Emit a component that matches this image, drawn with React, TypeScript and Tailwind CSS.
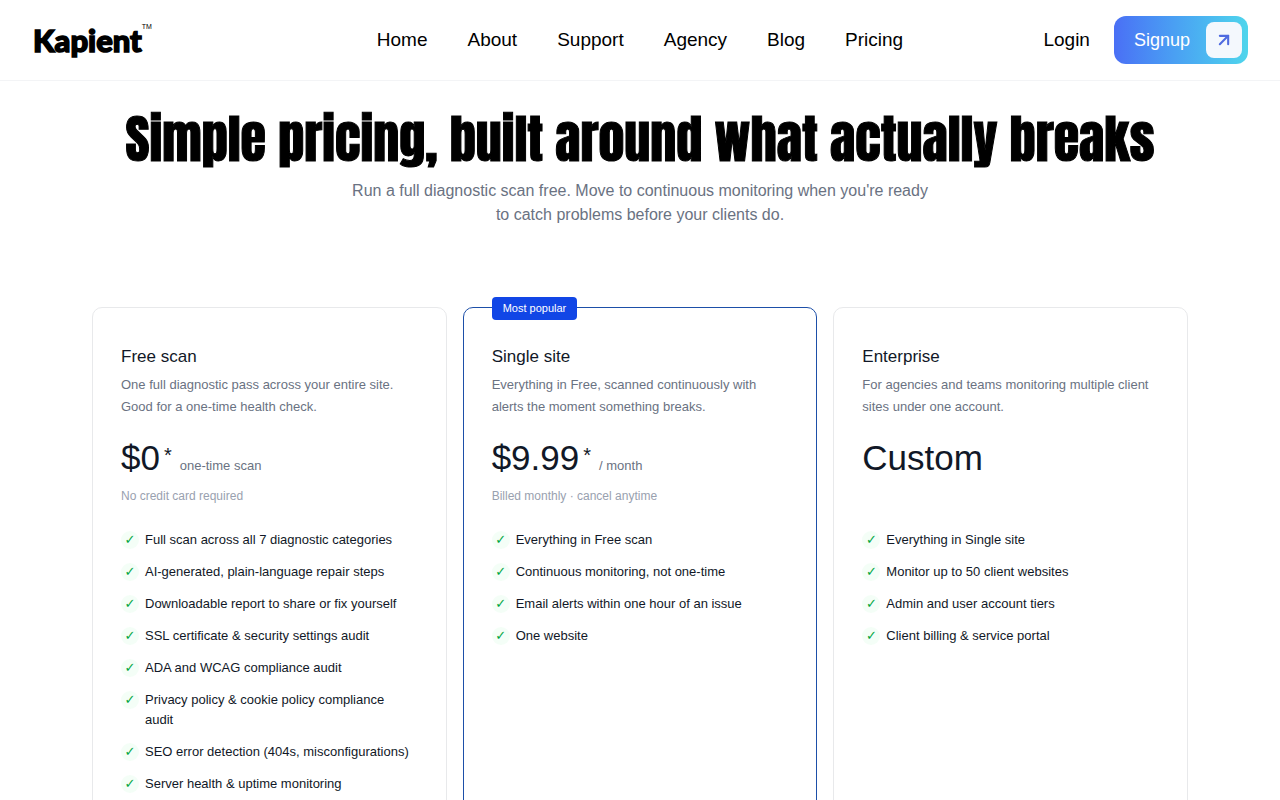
import { ArrowUpRight } from "lucide-react";

type Plan = {
  name: string;
  description: string;
  price: string;
  starred: boolean;
  unit?: string;
  note?: string;
  popular?: boolean;
  features: string[];
};

const links = ["Home", "About", "Support", "Agency", "Blog", "Pricing"];

const plans: Plan[] = [
  {
    name: "Free scan",
    description: "One full diagnostic pass across your entire site. Good for a one-time health check.",
    price: "$0",
    starred: true,
    unit: "one-time scan",
    note: "No credit card required",
    features: [
      "Full scan across all 7 diagnostic categories",
      "AI-generated, plain-language repair steps",
      "Downloadable report to share or fix yourself",
      "SSL certificate & security settings audit",
      "ADA and WCAG compliance audit",
      "Privacy policy & cookie policy compliance audit",
      "SEO error detection (404s, misconfigurations)",
      "Server health & uptime monitoring",
    ],
  },
  {
    name: "Single site",
    description: "Everything in Free, scanned continuously with alerts the moment something breaks.",
    price: "$9.99",
    starred: true,
    unit: "/ month",
    note: "Billed monthly · cancel anytime",
    popular: true,
    features: [
      "Everything in Free scan",
      "Continuous monitoring, not one-time",
      "Email alerts within one hour of an issue",
      "One website",
    ],
  },
  {
    name: "Enterprise",
    description: "For agencies and teams monitoring multiple client sites under one account.",
    price: "Custom",
    starred: false,
    features: [
      "Everything in Single site",
      "Monitor up to 50 client websites",
      "Admin and user account tiers",
      "Client billing & service portal",
    ],
  },
];

function Header() {
  return (
    <header className="grid h-[81px] grid-cols-[1fr_auto_1fr] items-center border-b border-gray-100 px-8 text-[19px] text-black">
      <a href="#" className="flex items-start justify-self-start pl-px font-['Lato',sans-serif] text-[31px]/[38px] font-black text-black">
        <span className="[-webkit-text-stroke:1.5px_black]">Kapient</span>
        <span className="font-['Liberation_Sans',sans-serif] text-[7px]/[12px] font-normal">TM</span>
      </a>
      <nav className="flex gap-10">
        {links.map((link) => (
          <a key={link} href="#">{link}</a>
        ))}
      </nav>
      <div className="flex items-center gap-6 justify-self-end">
        <a href="#">Login</a>
        <a href="#" className="flex h-12 items-center gap-4 rounded-xl bg-linear-to-r from-[#4a6ff5] to-[#4fd5ec] pr-1.5 pl-5 text-[18px] text-white">
          Signup
          <span className="flex size-9 items-center justify-center rounded-lg bg-[#f4f8fd] text-[#4f6be0]">
            <ArrowUpRight size={20} strokeWidth={2.5} />
          </span>
        </a>
      </div>
    </header>
  );
}

function PlanCard({ plan }: { plan: Plan }) {
  return (
    <article
      className={`relative rounded-[10px] border px-7 pt-9 pb-8 ${plan.popular ? "border-[#1d4fa8]" : "border-[#e8e9eb]"}`}
    >
      {plan.popular && (
        <span className="absolute -top-[11px] left-7 rounded-[4px] bg-[#1146e6] px-[11px] text-[11px]/[23px] text-white">
          Most popular
        </span>
      )}
      <h2 className="text-[17px]/[26px] text-[#111827]">{plan.name}</h2>
      <p className="mt-1 text-[13px]/[22px] text-gray-500">{plan.description}</p>
      <div className="mt-4 flex h-12 items-baseline gap-2">
        <span className="text-[35px]/[48px] text-[#111827]">
          {plan.price}
          {plan.starred && <sup className="-top-2 pl-1 text-[20px]">*</sup>}
        </span>
        {plan.unit && <span className="text-[13px] text-gray-500">{plan.unit}</span>}
      </div>
      <p className="mt-1 h-5 text-[12px]/[20px] text-gray-400">{plan.note}</p>
      <ul className="mt-6 flex flex-col gap-3">
        {plan.features.map((feature) => (
          <li key={feature} className="flex gap-1.5 pr-1 text-[13px]/[20px] text-[#111827]">
            <span className="mt-px flex size-[18px] shrink-0 items-center justify-center rounded-full bg-green-50/70 font-['DejaVu_Sans',sans-serif] text-[13px] text-green-600">
              ✓
            </span>
            {feature}
          </li>
        ))}
      </ul>
    </article>
  );
}

export default function App() {
  return (
    <div className="h-screen overflow-hidden bg-white font-['Liberation_Sans',Arial,sans-serif]">
      <Header />
      <main>
        <section className="px-6 pt-6 text-center">
          <h1 className="font-['Anton','Liberation_Sans',sans-serif] text-[52px]/[68px] font-normal text-black [-webkit-text-stroke:1px_black]">
            Simple pricing, built around what actually breaks
          </h1>
          <p className="mx-auto mt-1.5 max-w-[584px] text-[16px]/[24px] text-gray-500">
            Run a full diagnostic scan free. Move to continuous monitoring when you're ready to catch problems before your clients do.
          </p>
        </section>
        <section className="mx-auto mt-20 grid max-w-[1096px] grid-cols-3 gap-4">
          {plans.map((plan) => (
            <PlanCard key={plan.name} plan={plan} />
          ))}
        </section>
      </main>
    </div>
  );
}
